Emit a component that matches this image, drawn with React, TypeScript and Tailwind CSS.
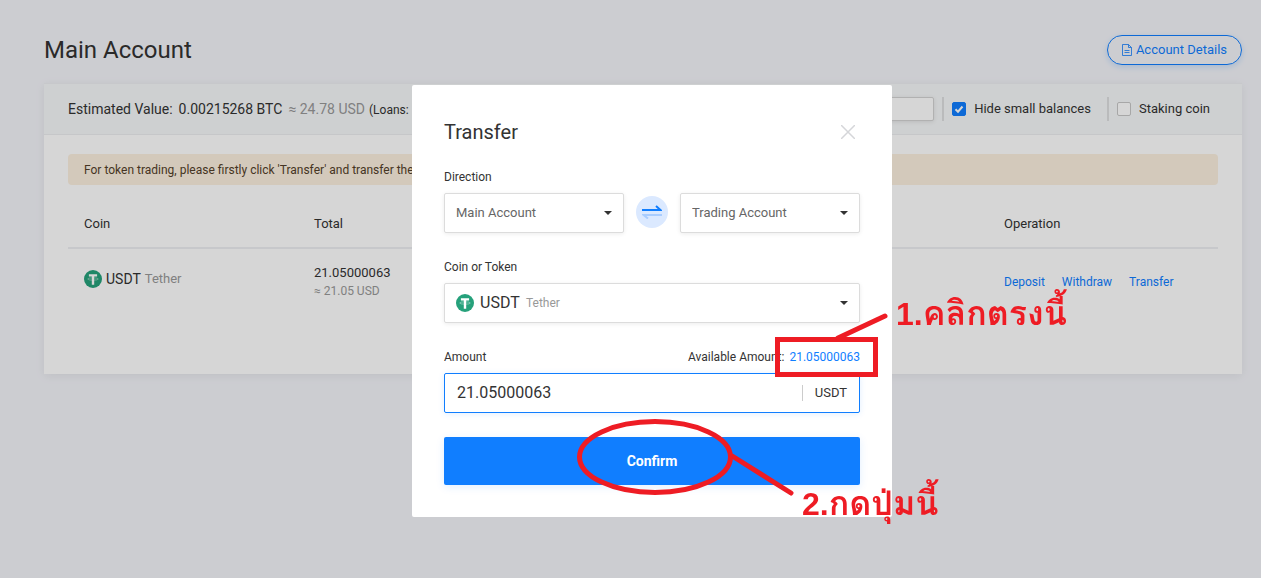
import { useState } from "react";
import type { ReactNode } from "react";

interface FieldProps {
  id: string;
  label: string;
  aside?: ReactNode;
  children: ReactNode;
}

interface DropdownProps {
  id: string;
  label?: string;
  options: string[];
}

function TetherIcon() {
  return (
    <svg className="size-[18px] shrink-0" viewBox="0 0 18 18" aria-hidden="true">
      <circle cx="9" cy="9" r="9" fill="#26a17b" />
      <ellipse cx="9" cy="9" rx="5.3" ry="1.2" fill="none" stroke="#fff" strokeWidth="0.7" opacity="0.55" />
      <path d="M4.9 4.3h8.200v2.300h-2.900V14.800H7.800V6.600H4.900z" fill="#fff" />
    </svg>
  );
}

function Caret() {
  return (
    <svg
      className="pointer-events-none absolute right-3 top-[18px] h-1 w-2"
      viewBox="0 0 8 4"
      aria-hidden="true"
    >
      <path d="M0 0h8L4 4z" fill="#333" />
    </svg>
  );
}

function Field({ id, label, aside, children }: FieldProps) {
  return (
    <div className="mt-6">
      <div className="mb-[6px] flex h-5 items-center justify-between text-xs">
        <label htmlFor={id}>{label}</label>
        {aside}
      </div>
      {children}
    </div>
  );
}

function Dropdown({ id, label, options }: DropdownProps) {
  return (
    <div className="relative flex-1">
      <select
        id={id}
        aria-label={label}
        className="h-10 w-full appearance-none rounded-xs border border-[#dcdcdc] bg-white px-[11px] text-[13px] text-[#666] shadow-[0_1px_4px_rgba(0,0,0,0.08)]"
      >
        {options.map((o) => (
          <option key={o}>{o}</option>
        ))}
      </select>
      <Caret />
    </div>
  );
}

function CheckOption({ id, label, defaultChecked }: { id: string; label: string; defaultChecked?: boolean }) {
  return (
    <div className="flex items-center border-l-2 border-[#dedfe0] pl-2">
      <span className="relative mr-2 size-[14px]">
        <input
          id={id}
          type="checkbox"
          defaultChecked={defaultChecked}
          className="peer block size-[14px] appearance-none rounded-xs border border-[#c8c8c8] bg-white checked:border-[#107eff] checked:bg-[#107eff]"
        />
        <svg
          className="pointer-events-none absolute inset-0 hidden size-[14px] peer-checked:block"
          viewBox="0 0 14 14"
          fill="none"
          stroke="#fff"
          strokeWidth="2"
          aria-hidden="true"
        >
          <path d="M3.5 7.2 6 9.7l4.5-5.2" />
        </svg>
      </span>
      <label htmlFor={id} className="text-[13px]">
        {label}
      </label>
    </div>
  );
}

function AccountPage() {
  return (
    <main className="min-h-screen bg-[#f4f5fa] pb-10 pl-11 pr-[19px] pt-[35px]">
      <div className="flex h-[30px] items-center justify-between">
        <h1 className="text-2xl">Main Account</h1>
        <button className="flex h-[30px] items-center gap-1 rounded-full border border-[#107eff] px-[14px] text-[13px] text-[#107eff] shadow-[0_2px_6px_rgba(16,126,255,0.2)]">
          <svg className="h-3 w-[10px]" viewBox="0 0 10 12" fill="none" stroke="currentColor" strokeWidth="0.8" aria-hidden="true">
            <path d="M6.5.5h-6v11h9v-8zM6.5.5v3h3M2.5 6.5h5M2.5 8.5h5" />
          </svg>
          Account Details
        </button>
      </div>

      <section className="mt-[18px] h-[291px] border-t border-[#eeeff2] bg-white shadow-[0_2px_10px_rgba(0,0,0,0.07)]">
        <div className="flex h-[51px] items-center justify-between border-b border-[#ecedf0] bg-[#f6f8f9] pl-6 pr-8">
          <p className="flex items-baseline whitespace-nowrap text-sm">
            Estimated Value:
            <span className="ml-[6px]">0.00215268 BTC</span>
            <span className="ml-[6px] text-[#999]">≈ 24.78 USD</span>
            <span className="ml-1 text-xs">(Loans:</span>
          </p>
          <div className="flex h-6 items-stretch">
            <input
              type="search"
              aria-label="Search coin"
              className="mr-2 w-40 rounded-xs border border-[#d3d3d3] bg-white px-2 text-xs shadow-[0_1px_4px_rgba(0,0,0,0.1)]"
            />
            <CheckOption id="hide-small" label="Hide small balances" defaultChecked />
            <span className="w-4" />
            <CheckOption id="staking" label="Staking coin" />
          </div>
        </div>

        <div className="px-6 pt-[19px]">
          <p className="h-[31px] overflow-hidden rounded-sm bg-[#fcf0df] px-4 text-xs leading-8 text-[#53402a]">
            For token trading, please firstly click 'Transfer' and transfer the
          </p>
          <table className="mt-4 w-full table-fixed text-left text-[13px]">
            <thead>
              <tr className="h-[47px] border-b-2 border-[#edeff2]">
                <th className="px-4 font-normal">Coin</th>
                <th className="px-4 font-normal">Total</th>
                <td />
                <td />
                <th className="px-4 font-normal">Operation</th>
              </tr>
            </thead>
            <tbody>
              <tr className="h-[66px]">
                <td className="px-4 pb-[6px]">
                  <div className="flex items-center">
                    <TetherIcon />
                    <span className="ml-1 text-sm">USDT</span>
                    <span className="ml-1 text-[#999]">Tether</span>
                  </div>
                </td>
                <td className="px-4 leading-[18px]">
                  21.05000063
                  <br />
                  <span className="text-xs text-[#999]">≈ 21.05 USD</span>
                </td>
                <td />
                <td />
                <td className="px-4">
                  <div className="flex gap-[17px] text-xs text-[#107eff]">
                    <a href="#deposit">Deposit</a>
                    <a href="#withdraw">Withdraw</a>
                    <a href="#transfer">Transfer</a>
                  </div>
                </td>
              </tr>
            </tbody>
          </table>
        </div>
      </section>
    </main>
  );
}

// hand-drawn help marks, in the dialog's own coordinates
function HelpMarks() {
  return (
    <div className="pointer-events-none absolute left-0 top-0 flex whitespace-nowrap text-[#ee1c24]">
      <svg className="h-[432px] w-[480px] overflow-visible" viewBox="0 0 480 432" fill="none" stroke="#ee1c24" strokeWidth="5" aria-hidden="true">
        <path d="M365.500 254.500h98v35h-98z" />
        <path d="M426 253 473 231M321 371.500 379 408" strokeLinecap="round" />
        <ellipse cx="243" cy="372" rx="75.500" ry="35.500" />
      </svg>
      <Caption className="absolute left-[484px] top-[208px]" step="1." text="คลิกตรงนี้" />
      <Caption className="absolute left-[390px] top-[398px]" step="2." text="กดปุ่มนี้" />
    </div>
  );
}

function Caption({ className, step, text }: { className: string; step: string; text: string }) {
  return (
    <p className={`flex items-baseline font-['Liberation_Sans','Loma','Garuda','Waree','Noto_Sans_Thai_Looped',sans-serif] text-[32px] font-bold leading-10 ${className}`}>
      {step}
      <span lang="th" className="text-[34px]">
        {text}
      </span>
    </p>
  );
}

function TransferDialog() {
  const [amount, setAmount] = useState("21.05000063");

  return (
    <div className="fixed inset-0 flex items-start justify-center bg-black/16 pl-[43px] pt-[85px]">
      <div role="dialog" aria-labelledby="transfer-title" className="relative w-[480px] rounded-xs bg-white p-8">
        <div className="-mb-1 flex h-[30px] items-center justify-between">
          <h2 id="transfer-title" className="text-xl">
            Transfer
          </h2>
          <button aria-label="Close" className="p-[5px]">
            <svg className="size-[14px]" viewBox="0 0 14 14" stroke="#d5d6d9" strokeWidth="1.5" aria-hidden="true">
              <path d="m0 0 14 14M14 0 0 14" />
            </svg>
          </button>
        </div>

        <Field id="from" label="Direction">
          <div className="flex gap-3">
            <Dropdown id="from" options={["Main Account", "Trading Account"]} />
            <button
              aria-label="Swap direction"
              className="mt-[3px] flex size-8 items-center justify-center rounded-full bg-[#dbe9ff]"
            >
              <svg className="h-[14px] w-5" viewBox="0 0 20 14" fill="none" strokeWidth="2" aria-hidden="true">
                <path d="M0 5h18.500L14 1" stroke="#107eff" />
                <path d="M20 10H1.500L6 13.500" stroke="#a9cdff" />
              </svg>
            </button>
            <Dropdown id="to" label="To account" options={["Trading Account", "Main Account"]} />
          </div>
        </Field>

        <Field id="coin" label="Coin or Token">
          <div className="relative">
            <select
              id="coin"
              className="h-10 w-full appearance-none rounded-xs border border-[#dcdcdc] bg-white pl-[35px] text-base text-[#333] shadow-[0_1px_4px_rgba(0,0,0,0.08)]"
            >
              <option>USDT</option>
            </select>
            <span className="pointer-events-none absolute left-3 top-[11px]">
              <TetherIcon />
            </span>
            <span className="pointer-events-none absolute left-[82px] top-[11px] text-xs leading-[18px] text-[#999]">
              Tether
            </span>
            <Caret />
          </div>
        </Field>

        <Field
          id="amount"
          label="Amount"
          aside={
            <span>
              Available Amount: <button className="ml-[2px] text-[#107eff]">21.05000063</button>
            </span>
          }
        >
          <div className="flex h-10 items-center rounded-xs border border-[#107eff] px-3 shadow-[0_1px_6px_rgba(16,126,255,0.12)]">
            <input
              id="amount"
              value={amount}
              onChange={(e) => setAmount(e.target.value)}
              className="min-w-0 flex-1 text-base outline-none"
            />
            <span className="border-l border-[#ccc] pl-3 text-[13px] leading-4">USDT</span>
          </div>
        </Field>

        <button className="mt-6 h-12 w-full rounded-xs bg-[#107eff] text-sm font-bold text-white shadow-[0_2px_8px_rgba(16,126,255,0.12)]">
          Confirm
        </button>

        <HelpMarks />
      </div>
    </div>
  );
}

export default function App() {
  return (
    <div className="font-[Roboto,sans-serif] text-[#333]">
      <AccountPage />
      <TransferDialog />
    </div>
  );
}
